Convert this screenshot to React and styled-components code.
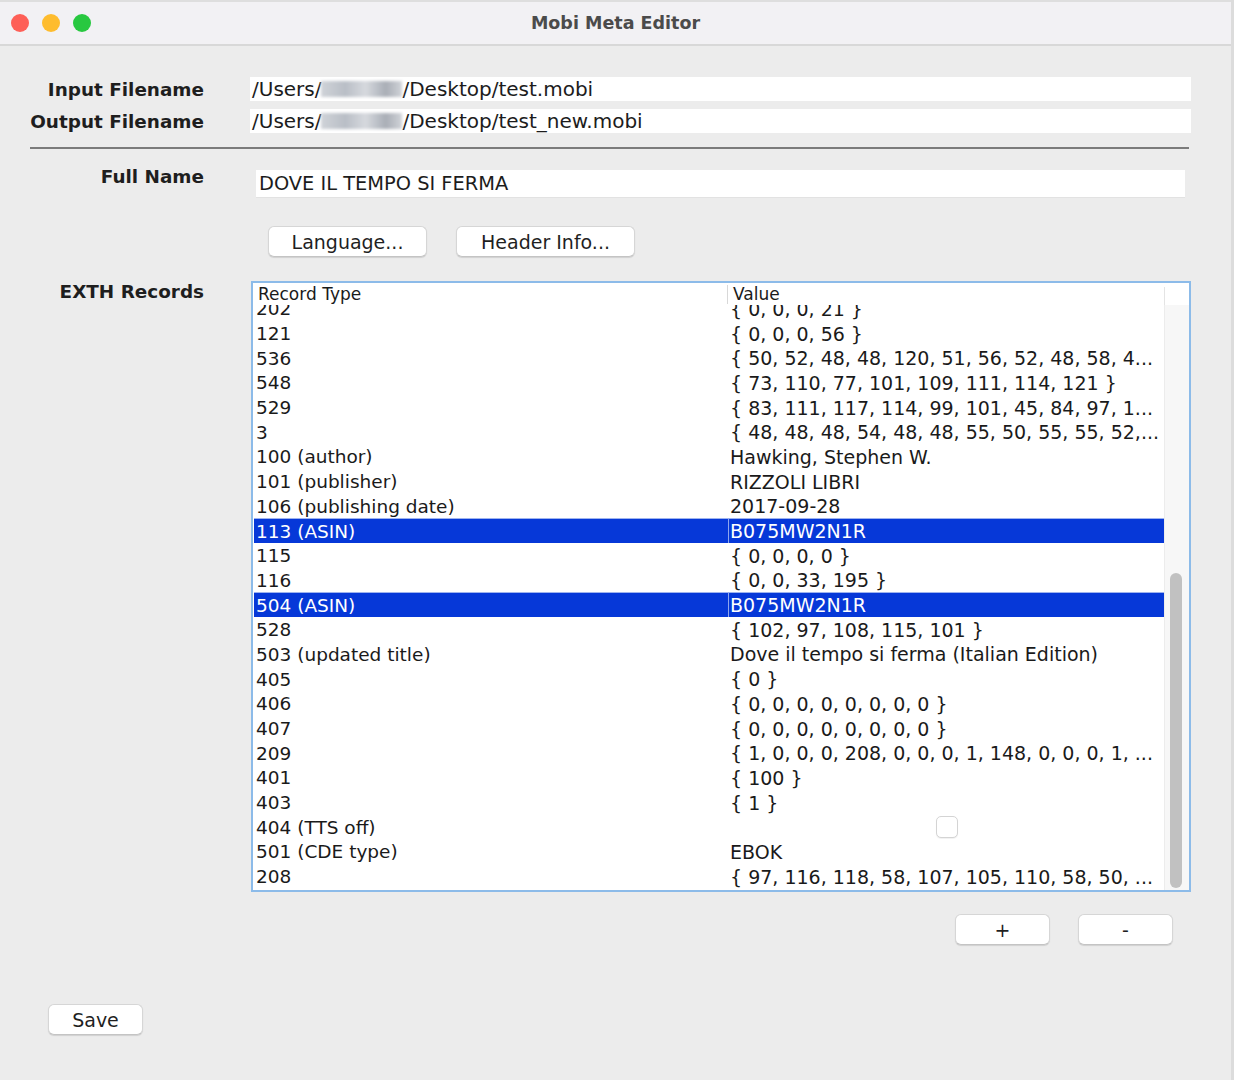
import React from 'react';
import styled, { createGlobalStyle } from 'styled-components';

const GlobalStyle = createGlobalStyle`
  html, body {
    margin: 0;
    padding: 0;
    background: #ececec;
  }
  body {
    font-family: "DejaVu Sans", "Noto Sans", sans-serif;
    color: #1c1c1c;
  }
`;

const Window = styled.div`
  width: 1234px;
  height: 1080px;
  display: flex;
  flex-direction: column;
  background: #ececec;
  box-sizing: border-box;
  border-right: 3px solid #dcdcdc;
`;

const TitleBar = styled.div`
  height: 46px;
  flex: none;
  display: flex;
  align-items: center;
  position: relative;
  background: #f2f1f4;
  border-top: 2px solid #dedede;
  border-bottom: 2px solid #d8d8d8;
  box-sizing: border-box;
`;

const Lights = styled.div`
  display: flex;
  gap: 13px;
  padding-left: 11px;
`;

const Light = styled.span`
  width: 18px;
  height: 18px;
  border-radius: 50%;
  background: ${p => p.$color};
`;

const Title = styled.div`
  position: absolute;
  left: 0;
  right: 0;
  text-align: center;
  font-size: 17.5px;
  font-weight: bold;
  color: #4b4b4b;
`;

const Content = styled.div`
  flex: 1;
  display: flex;
  flex-direction: column;
  padding: 31px 40px 0 30px;
`;

const FormRow = styled.div`
  display: grid;
  grid-template-columns: 174px 1fr;
  column-gap: ${p => p.$gap || 46}px;
  align-items: center;
  margin-bottom: ${p => p.$mb || 0}px;
`;

const Label = styled.div`
  font-size: 18.4px;
  font-weight: bold;
  text-align: right;
  color: #1e1e1e;
  align-self: ${p => p.$top ? 'start' : 'center'};
  margin-top: ${p => p.$shift || 0}px;
`;

const Field = styled.div`
  height: ${p => p.$h || 24}px;
  background: #ffffff;
  font-size: ${p => p.$fs || 20}px;
  line-height: ${p => p.$h || 24}px;
  padding-left: ${p => p.$pl || 2}px;
  white-space: nowrap;
  overflow: hidden;
  margin-right: ${p => p.$mr || 0}px;
  border-bottom: ${p => p.$h ? '1px solid #e2e2e2' : 'none'};
`;

const Blur = styled.span`
  display: inline-block;
  width: ${p => p.$w}px;
  height: 16px;
  vertical-align: -1px;
  background: linear-gradient(90deg, #cfd3d8, #b9bec6 30%, #d6d9de 55%, #a9aeb6 80%, #d0d3d8);
  filter: blur(1.5px);
`;

const Separator = styled.div`
  height: 2px;
  background: #7b7b7b;
  margin: 14px 2px 21px 0;
`;

const ButtonRow = styled.div`
  display: flex;
  gap: 29px;
  padding-left: 238px;
  margin: 28px 0 24px;
`;

const MacButton = styled.button`
  width: ${p => p.$w}px;
  height: 31px;
  background: #ffffff;
  border: 1px solid #d6d6d6;
  border-bottom-color: #c4c4c4;
  border-radius: 6px;
  box-shadow: 0 1px 1px rgba(0, 0, 0, 0.12);
  font-family: "DejaVu Sans", sans-serif;
  font-size: 19px;
  color: #1f1f1f;
  padding: 0;
`;

const Table = styled.div`
  height: 611px;
  background: #ffffff;
  border: 2px solid #8cbbe9;
  box-sizing: border-box;
  display: grid;
  grid-template-columns: 1fr 25px;
  grid-template-rows: 22px 1fr;
`;

const Header = styled.div`
  display: grid;
  grid-template-columns: 474px 1fr;
  font-size: 17px;
`;

const HeaderCell = styled.div`
  padding-left: ${p => p.$pl}px;
  border-left: ${p => p.$sep ? '1px solid #d8d8d8' : 'none'};
  height: 19px;
  margin-top: 2px;
  line-height: 18px;
  color: #1a1a1a;
`;

const HeaderCorner = styled.div`
  border-left: 1px solid #e4e4e4;
  margin-top: 4px;
  background: #ffffff;
`;

const Body = styled.div`
  overflow: hidden;
  padding: 0 0 0 1px;
`;

const Rows = styled.div`
  margin-top: -9px;
`;

const Row = styled.div`
  display: grid;
  grid-template-columns: 474px 1fr;
  height: 24.7px;
  color: ${p => p.$sel ? '#ffffff' : '#1a1a1a'};
  white-space: nowrap;
`;

const Cell = styled.div`
  padding-left: ${p => p.$pl}px;
  overflow: hidden;
  background: ${p => p.$sel ? '#0638d8' : 'transparent'};
  border-left: ${p => p.$sep ? `1px solid ${p.$sel ? '#8fa6ee' : 'transparent'}` : 'none'};
  border-top: 1px solid ${p => p.$sel ? '#9eb3ef' : 'transparent'};
  box-sizing: border-box;
  display: flex;
  align-items: center;
  justify-content: ${p => p.$center ? 'center' : 'flex-start'};
  font-size: ${p => p.$fs || 18.5}px;
`;

const Check = styled.span`
  width: 20px;
  height: 20px;
  border: 1px solid #d4d4d4;
  border-radius: 5px;
  background: #ffffff;
  box-shadow: 0 1px 1px rgba(0, 0, 0, 0.06);
`;

const ScrollTrack = styled.div`
  background: #f7f7f7;
  border-left: 1px solid #ececec;
  padding: 268px 4px 2px 5px;
  grid-row: 2;
  grid-column: 2;
`;

const Thumb = styled.div`
  height: 100%;
  border-radius: 7px;
  background: #c1c1c1;
  width: 12px;
`;

const Actions = styled.div`
  display: flex;
  justify-content: flex-end;
  gap: 28px;
  padding-right: 18px;
  margin-top: 22px;
`;

const Footer = styled.div`
  margin-top: 59px;
  padding-left: 18px;
`;

const records = [
  ['202', '{ 0, 0, 0, 21 }'],
  ['121', '{ 0, 0, 0, 56 }'],
  ['536', '{ 50, 52, 48, 48, 120, 51, 56, 52, 48, 58, 4...'],
  ['548', '{ 73, 110, 77, 101, 109, 111, 114, 121 }'],
  ['529', '{ 83, 111, 117, 114, 99, 101, 45, 84, 97, 1...'],
  ['3', '{ 48, 48, 48, 54, 48, 48, 55, 50, 55, 55, 52,...'],
  ['100 (author)', 'Hawking, Stephen W.'],
  ['101 (publisher)', 'RIZZOLI LIBRI'],
  ['106 (publishing date)', '2017-09-28'],
  ['113 (ASIN)', 'B075MW2N1R', true],
  ['115', '{ 0, 0, 0, 0 }'],
  ['116', '{ 0, 0, 33, 195 }'],
  ['504 (ASIN)', 'B075MW2N1R', true],
  ['528', '{ 102, 97, 108, 115, 101 }'],
  ['503 (updated title)', 'Dove il tempo si ferma (Italian Edition)'],
  ['405', '{ 0 }'],
  ['406', '{ 0, 0, 0, 0, 0, 0, 0, 0 }'],
  ['407', '{ 0, 0, 0, 0, 0, 0, 0, 0 }'],
  ['209', '{ 1, 0, 0, 0, 208, 0, 0, 0, 1, 148, 0, 0, 0, 1, ...'],
  ['401', '{ 100 }'],
  ['403', '{ 1 }'],
  ['404 (TTS off)', null],
  ['501 (CDE type)', 'EBOK'],
  ['208', '{ 97, 116, 118, 58, 107, 105, 110, 58, 50, ...'],
];

export default function App() {
  return (
    <>
      <GlobalStyle />
      <Window>
        <TitleBar>
          <Lights>
            <Light $color="#fe5f57" />
            <Light $color="#febc2e" />
            <Light $color="#28c840" />
          </Lights>
          <Title>Mobi Meta Editor</Title>
        </TitleBar>
        <Content>
          <FormRow $mb={8}>
            <Label>Input Filename</Label>
            <Field>/Users/<Blur $w={81} />/Desktop/test.mobi</Field>
          </FormRow>
          <FormRow>
            <Label>Output Filename</Label>
            <Field>/Users/<Blur $w={81} />/Desktop/test_new.mobi</Field>
          </FormRow>
          <Separator />
          <FormRow $gap={52}>
            <Label $top $shift={-4}>Full Name</Label>
            <Field $mr={6} $h={27} $fs={19.4} $pl={3}>DOVE IL TEMPO SI FERMA</Field>
          </FormRow>
          <ButtonRow>
            <MacButton $w={159}>Language...</MacButton>
            <MacButton $w={179}>Header Info...</MacButton>
          </ButtonRow>
          <FormRow $gap={47}>
            <Label $top>EXTH Records</Label>
            <Table>
              <Header>
                <HeaderCell $pl={5}>Record Type</HeaderCell>
                <HeaderCell $pl={5} $sep>Value</HeaderCell>
              </Header>
              <HeaderCorner />
              <Body>
                <Rows>
                  {records.map(([type, value, sel]) => (
                    <Row key={type} $sel={sel}>
                      <Cell $pl={2} $sel={sel}>{type}</Cell>
                      {value === null ? (
                        <Cell $pl={0} $sep $center><Check /></Cell>
                      ) : (
                        <Cell $pl={1} $sep $sel={sel} $fs={19}>{value}</Cell>
                      )}
                    </Row>
                  ))}
                </Rows>
              </Body>
              <ScrollTrack>
                <Thumb />
              </ScrollTrack>
            </Table>
          </FormRow>
          <Actions>
            <MacButton $w={95}>+</MacButton>
            <MacButton $w={95}>-</MacButton>
          </Actions>
          <Footer>
            <MacButton $w={95}>Save</MacButton>
          </Footer>
        </Content>
      </Window>
    </>
  );
}
